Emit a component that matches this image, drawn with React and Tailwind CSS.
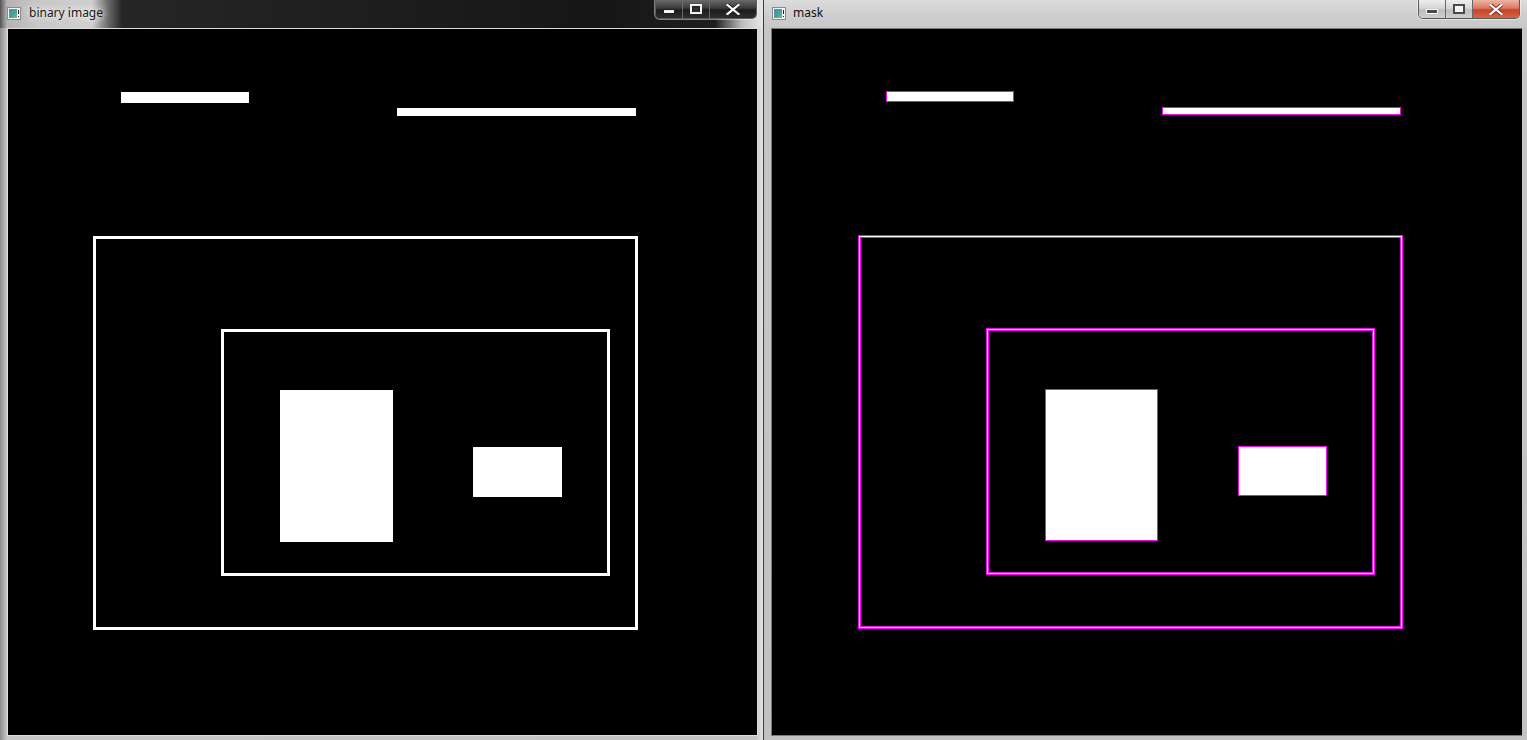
import React from "react";

function WinIcon() {
  return (
    <svg width="14" height="13" viewBox="0 0 14 13" className="shrink-0">
      <defs>
        <linearGradient id="wig" x1="0" y1="0" x2="1" y2="1">
          <stop offset="0" stopColor="#3f8fb8" />
          <stop offset="0.6" stopColor="#4aa39a" />
          <stop offset="1" stopColor="#86c06a" />
        </linearGradient>
      </defs>
      <rect x="0.5" y="0.5" width="13" height="12" fill="#f4f4f4" stroke="#8a8a8a" />
      <rect x="2" y="2" width="8" height="9" fill="url(#wig)" />
      <rect x="11" y="3" width="1" height="4" fill="#222" />
      <rect x="11" y="9" width="1" height="1" fill="#222" />
    </svg>
  );
}

function Buttons({ active }) {
  const side = active
    ? "bg-[linear-gradient(to_bottom,#eeeeee_0%,#d6d6d6_45%,#bdbdbd_55%,#cfcfcf_100%)]"
    : "bg-[linear-gradient(to_bottom,#6a6a6a_0%,#3a3a3a_45%,#1c1c1c_55%,#2e2e2e_100%)]";
  const close = active
    ? "bg-[linear-gradient(to_bottom,#f0b4a4_0%,#dc7a62_45%,#c5452c_55%,#d8643e_100%)]"
    : "bg-[linear-gradient(to_bottom,#6a6a6a_0%,#3a3a3a_45%,#1c1c1c_55%,#2e2e2e_100%)]";
  const ic = active ? "#4a4a4a" : "#f2f2f2";
  const ol = active ? "#f8f8f8" : "#202020";
  return (
    <div className="self-start flex h-[19px] rounded-b-[5px] border border-t-0 border-[#5a5a5a] overflow-hidden shadow-[0_0_0_1px_rgba(255,255,255,0.45)]">
      <div className={`w-[27px] h-full flex items-center justify-center border-r border-[#6a6a6a] ${side}`}>
        <svg width="12" height="6" viewBox="0 0 12 6" className="mt-[5px]">
          <rect x="0.5" y="0.5" width="11" height="4" fill={ic} stroke={ol} />
        </svg>
      </div>
      <div className={`w-[27px] h-full flex items-center justify-center border-r border-[#6a6a6a] ${side}`}>
        <svg width="12" height="10" viewBox="0 0 12 10">
          <rect x="0.5" y="0.5" width="11" height="9" fill={ol} stroke={ic} />
          <rect x="1.5" y="1.5" width="9" height="7" fill="none" stroke={ic} />
          <rect x="3" y="3.5" width="6" height="4" fill={active ? "#f2f2f2" : "#303030"} />
        </svg>
      </div>
      <div className={`w-[46px] h-full flex items-center justify-center ${close}`}>
        <svg width="14" height="11" viewBox="0 0 14 11">
          <path d="M1.5 1 L12.5 10 M12.5 1 L1.5 10" stroke={active ? "#7a2a1a" : "#202020"} strokeWidth="4" strokeLinecap="square" />
          <path d="M1.5 1 L12.5 10 M12.5 1 L1.5 10" stroke="#ffffff" strokeWidth="2.2" strokeLinecap="square" />
        </svg>
      </div>
    </div>
  );
}

// filled ring: outer box x,y,w,h with thickness t
function Ring({ x, y, w, h, t, fill }) {
  const d = `M${x} ${y}H${x + w}V${y + h}H${x}Z M${x + t} ${y + t}V${y + h - t}H${x + w - t}V${y + t}Z`;
  return <path d={d} fill={fill} fillRule="evenodd" />;
}

const SHAPES = {
  bar1: [113, 63, 128, 11],
  bar2: [389, 79, 239, 8],
  outer: [85, 207, 545, 394],
  inner: [213, 300, 389, 247],
  tall: [272, 361, 113, 152],
  small: [465, 418, 89, 50],
};

function BinaryCanvas() {
  const s = SHAPES;
  return (
    <svg width="749" height="706" viewBox="0 0 749 706" shapeRendering="crispEdges" className="block">
      <rect x="0" y="0" width="749" height="706" fill="#000" />
      <rect x={s.bar1[0]} y={s.bar1[1]} width={s.bar1[2]} height={s.bar1[3]} fill="#fff" />
      <rect x={s.bar2[0]} y={s.bar2[1]} width={s.bar2[2]} height={s.bar2[3]} fill="#fff" />
      <Ring x={s.outer[0]} y={s.outer[1]} w={s.outer[2]} h={s.outer[3]} t={3} fill="#fff" />
      <Ring x={s.inner[0]} y={s.inner[1]} w={s.inner[2]} h={s.inner[3]} t={3} fill="#fff" />
      <rect x={s.tall[0]} y={s.tall[1]} width={s.tall[2]} height={s.tall[3]} fill="#fff" />
      <rect x={s.small[0]} y={s.small[1]} width={s.small[2]} height={s.small[3]} fill="#fff" />
    </svg>
  );
}

function Solid({ r, M }) {
  const [x, y, w, h] = r;
  return (
    <g>
      <rect x={x} y={y} width={w} height={h} fill="#fff" />
      <Ring x={x} y={y} w={w} h={h} t={1} fill={M} />
    </g>
  );
}

function Line3({ r, M }) {
  const [x, y, w, h] = r;
  return (
    <g>
      <Ring x={x} y={y} w={w} h={h} t={3} fill="#fff" />
      <Ring x={x} y={y} w={w} h={h} t={1} fill={M} />
      <Ring x={x + 2} y={y + 2} w={w - 4} h={h - 4} t={1} fill={M} />
    </g>
  );
}

function MaskCanvas() {
  const M = "#ff00ff";
  const sh = (r) => [r[0] + 1, r[1] - 1, r[2], r[3]];
  const s = SHAPES;
  return (
    <svg width="750" height="706" viewBox="0 0 750 706" shapeRendering="crispEdges" className="block">
      <rect x="0" y="0" width="750" height="706" fill="#000" />
      <Solid r={sh(s.bar1)} M={M} />
      <Solid r={sh(s.bar2)} M={M} />
      <Line3 r={sh(s.outer)} M={M} />
      <Line3 r={sh(s.inner)} M={M} />
      <Solid r={sh(s.tall)} M={M} />
      <Solid r={sh(s.small)} M={M} />
    </svg>
  );
}

export default function App() {
  return (
    <div className="flex w-[1527px] h-[740px] overflow-hidden bg-[#1a1a1a] font-['Noto_Sans','Liberation_Sans',sans-serif]">
      {/* left window (inactive) */}
      <div className="w-[763px] h-[740px] flex flex-col bg-[linear-gradient(to_right,#8c8c8c_0px,#c8c8c8_7px,#c4c4c4_756px,#e6e6e6_763px)]">
        <div className="h-[28px] flex items-start bg-[linear-gradient(to_right,#555555_0px,#b4b4b4_7px,#c8c8c8_40px,#cfcfcf_92px,#6a6a6a_108px,#262626_122px,#161616_600px,#1e1e1e_715px,#bdbdbd_742px,#e8e8e8_763px)]">
          <div className="flex items-center h-[26px] pl-[7px] gap-[8px]">
            <WinIcon />
            <span className="text-[12px] text-[#1a1a1a] leading-none [text-shadow:0_0_6px_#ffffff,0_0_10px_#ffffff]">binary image</span>
          </div>
          <div className="flex-1" />
          <div className="mr-[6px]">
            <Buttons active={false} />
          </div>
        </div>
        <div className="flex-1 pl-[7px] pr-[5px] pb-[4px]">
          <div className="border border-[#dcdcdc] w-[751px] h-[708px]">
            <BinaryCanvas />
          </div>
        </div>
      </div>
      {/* separator */}
      <div className="w-[1px] h-[740px] bg-[#3a3a3a]" />
      {/* right window (active) */}
      <div className="w-[763px] h-[740px] flex flex-col bg-[linear-gradient(to_bottom,#d4d4d4_0px,#c6c6c6_30px,#c2c2c2_740px)]">
        <div className="h-[28px] flex items-start bg-[linear-gradient(to_bottom,#dcdcdc_0px,#cfcfcf_14px,#c8c8c8_28px)]">
          <div className="flex items-center h-[26px] pl-[8px] gap-[7px]">
            <WinIcon />
            <span className="text-[12px] text-[#101010] leading-none">mask</span>
          </div>
          <div className="flex-1" />
          <div className="mr-[7px]">
            <Buttons active={true} />
          </div>
        </div>
        <div className="flex-1 pl-[7px] pb-[4px]">
          <div className="border border-r-0 border-[#7a7a7a] w-[751px] h-[708px]">
            <MaskCanvas />
          </div>
        </div>
      </div>
    </div>
  );
}
